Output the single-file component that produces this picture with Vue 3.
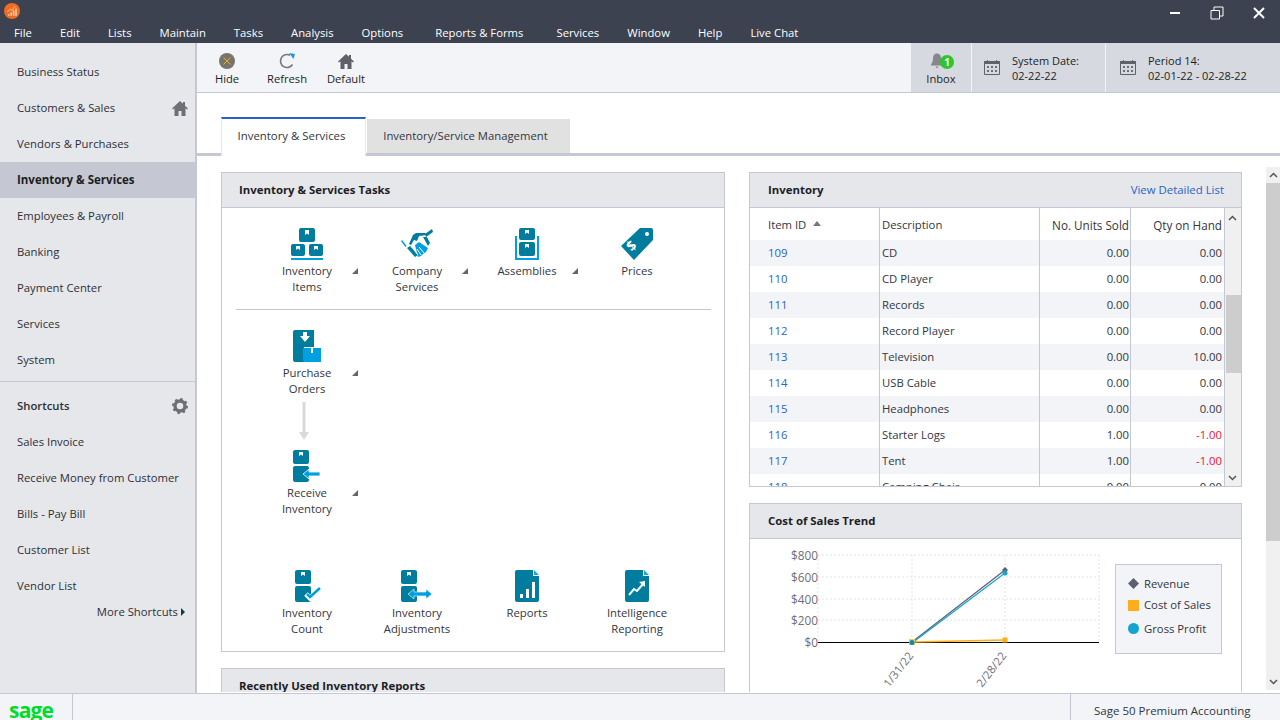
<script setup>
const menus = ['File', 'Edit', 'Lists', 'Maintain', 'Tasks', 'Analysis', 'Options', 'Reports & Forms', 'Services', 'Window', 'Help', 'Live Chat'];
const navItems = ['Business Status', 'Customers & Sales', 'Vendors & Purchases', 'Inventory & Services', 'Employees & Payroll', 'Banking', 'Payment Center', 'Services', 'System'];
const shortcuts = ['Sales Invoice', 'Receive Money from Customer', 'Bills - Pay Bill', 'Customer List', 'Vendor List'];

const rows = [
    ['109', 'CD', '0.00', '0.00'],
    ['110', 'CD Player', '0.00', '0.00'],
    ['111', 'Records', '0.00', '0.00'],
    ['112', 'Record Player', '0.00', '0.00'],
    ['113', 'Television', '0.00', '10.00'],
    ['114', 'USB Cable', '0.00', '0.00'],
    ['115', 'Headphones', '0.00', '0.00'],
    ['116', 'Starter Logs', '1.00', '-1.00'],
    ['117', 'Tent', '1.00', '-1.00'],
    ['118', 'Camping Chair', '0.00', '0.00'],
];

const yTicks = [['$800', 556], ['$600', 578], ['$400', 600], ['$200', 621], ['$0', 643]];
</script>

<template>
    <div class="app">
        <header class="titlebar">
            <div class="title-top">
                <svg class="app-logo" width="16" height="16" viewBox="0 0 20 20">
                    <circle cx="10" cy="10" r="10" fill="#f26b21" />
                    <path d="M5 14h2v2H5zM8 12h2v4H8zM11 9h2v7h-2zM14 7h2v9h-2z" fill="#fbd0b0" />
                    <path d="M4 11l4-3 2 1 4-5" stroke="#fbd0b0" fill="none" />
                </svg>
                <div class="win-btns">
                    <svg width="14" height="14" viewBox="0 0 14 14"><path d="M2 7h10" stroke="#fff" stroke-width="2" /></svg>
                    <svg width="14" height="14" viewBox="0 0 14 14"><path d="M1 4.500h8.500v8.500h-8.500zM4 4V1h9v9h-3.500" stroke="#fff" fill="none" /></svg>
                    <svg width="14" height="14" viewBox="0 0 14 14"><path d="M2 2l10 10M12 2L2 12" stroke="#fff" stroke-width="2" /></svg>
                </div>
            </div>
            <nav class="menubar">
                <span v-for="m in menus" :key="m">{{ m }}</span>
            </nav>
        </header>

        <div class="middle">
            <aside class="sidebar">
                <div class="nav">
                    <div v-for="item in navItems" :key="item" class="nav-item" :class="{ active: item === 'Inventory & Services' }">
                        {{ item }}
                        <svg v-if="item === 'Customers & Sales'" class="nav-home" width="16" height="16" viewBox="0 0 16 16">
                            <path d="M8 1L0 8.500l1 1 1.500-1.300V16h4v-5h3v5h4V8.200L15 9.500l1-1-3-2.800V2h-2v1.800z" fill="#6d6f75" />
                        </svg>
                    </div>
                </div>
                <div class="shortcuts-head">
                    <span>Shortcuts</span>
                    <svg width="16" height="16" viewBox="0 0 16 16">
                        <circle cx="8" cy="8" r="5" fill="none" stroke="#6d6f75" stroke-width="3.400" />
                        <circle cx="8" cy="8" r="7" fill="none" stroke="#6d6f75" stroke-width="2" stroke-dasharray="2.500 3" />
                    </svg>
                </div>
                <div v-for="s in shortcuts" :key="s" class="nav-item">{{ s }}</div>
                <div class="more">More Shortcuts <i class="more-arrow"></i></div>
            </aside>

            <main class="main">
                <div class="toolbar">
                    <div class="tool tool-hide">
                        <svg width="16" height="16" viewBox="0 0 16 16">
                            <circle cx="8" cy="8" r="8" fill="#76746f" />
                            <path d="M4.500 4.500l7 7M11.500 4.500l-7 7" stroke="#f5a81c" />
                        </svg>
                        <span>Hide</span>
                    </div>
                    <div class="tool tool-refresh">
                        <svg width="17" height="16" viewBox="0 0 17 16">
                            <path d="M13.500 11.500A6.500 6.500 0 1 1 11 2.300" fill="none" stroke="#75787e" stroke-width="1.600" />
                            <path d="M10 0l6 1-1.500 5z" fill="#1b9ad6" />
                        </svg>
                        <span>Refresh</span>
                    </div>
                    <div class="tool tool-default">
                        <svg width="16" height="16" viewBox="0 0 16 16">
                            <path d="M8 1L0 8.500l1 1 1.500-1.300V16h4v-5h3v5h4V8.200L15 9.500l1-1-3-2.800V2h-2v1.800z" fill="#5f6168" />
                        </svg>
                        <span>Default</span>
                    </div>
                    <div class="toolbar-right">
                        <div class="inbox">
                            <div class="bell">
                                <svg width="12" height="16" viewBox="0 0 12 16">
                                    <path d="M6 0.500c-3 0-4 2.500-4 5 0 3-1 4.500-2 6v1h12v-1c-1-1.500-2-3-2-6 0-2.500-1-5-4-5zM4.500 13.500h3L6 15.500z" fill="#85878c" />
                                </svg>
                                <span class="badge">1</span>
                            </div>
                            <span>Inbox</span>
                        </div>
                        <div class="date-box date-system">
                            <svg width="16" height="16" viewBox="0 0 16 16">
                                <path d="M0.500 2.500h15v13h-15z" fill="none" stroke="#5f626b" />
                                <path d="M0 2h16v3H0zM3 1h1v2H3zM12 1h1v2h-1z" fill="#5f626b" />
                                <path d="M3 7h2v2H3zM7 7h2v2H7zM11 7h2v2h-2zM3 11h2v2H3zM7 11h2v2H7zM11 11h2v2h-2z" fill="#6c6f78" />
                            </svg>
                            <div>System Date:<br />02-22-22</div>
                        </div>
                        <div class="date-box date-period">
                            <svg width="16" height="16" viewBox="0 0 16 16">
                                <path d="M0.500 2.500h15v13h-15z" fill="none" stroke="#5f626b" />
                                <path d="M0 2h16v3H0zM3 1h1v2H3zM12 1h1v2h-1z" fill="#5f626b" />
                                <path d="M3 7h2v2H3zM7 7h2v2H7zM11 7h2v2h-2zM3 11h2v2H3zM7 11h2v2H7zM11 11h2v2h-2z" fill="#6c6f78" />
                            </svg>
                            <div>Period 14:<br />02-01-22 - 02-28-22</div>
                        </div>
                    </div>
                </div>

                <div class="tabs">
                    <div class="tab tab-active">Inventory &amp; Services</div>
                    <div class="tab tab-other">Inventory/Service Management</div>
                </div>

                <div class="body">
                    <div class="pane">
                        <div class="col-left">
                            <section class="panel">
                                <div class="panel-head">Inventory &amp; Services Tasks</div>
                                <div class="tasks">
                                    <div class="task-row">
                                        <div class="task has-menu">
                                            <svg width="32" height="32" viewBox="0 0 32 32">
                                                <rect x="8" y="0" width="16" height="14" rx="2" fill="#007c9e" />
                                                <rect x="0" y="16" width="14" height="12" rx="2" fill="#007c9e" />
                                                <rect x="18" y="16" width="14" height="12" rx="2" fill="#007c9e" />
                                                <path d="M14 2h4v5l-2-1.500-2 1.500zM5 18h4v4l-2-1.500-2 1.500zM23 18h4v4l-2-1.500-2 1.500z" fill="#fff" />
                                                <rect x="0" y="30" width="32" height="2" fill="#009fe0" />
                                            </svg>
                                            <span>Inventory<br />Items</span>
                                        </div>
                                        <div class="task has-menu">
                                            <svg width="32" height="32" viewBox="0 0 32 32">
                                                <path d="M0.500 12.500L5 18.500" stroke="#009fe0" stroke-width="1.500" />
                                                <path d="M6 20l3-2 8 9-3 2z" fill="#007c9e" />
                                                <path d="M8 16l4-9 3-2h9l2 2-8 1-2 5-3-1-3 5z" fill="#007c9e" />
                                                <path d="M24 6l7-5 1 3-7 5z" fill="#007c9e" />
                                                <path d="M14 17l4-3 9 6-2 4-3 2-2 2-3 1z" fill="#009fe0" />
                                                <path d="M18 19l5 6M16 21l4 6M14 23l3 4" stroke="#fff" />
                                                <path d="M22 9l5 9 2-3-3-6z" fill="#007c9e" />
                                            </svg>
                                            <span>Company<br />Services</span>
                                        </div>
                                        <div class="task has-menu">
                                            <svg width="32" height="32" viewBox="0 0 32 32">
                                                <rect x="8" y="0" width="16" height="12" rx="2" fill="#007c9e" />
                                                <rect x="8" y="14" width="16" height="14" rx="2" fill="#007c9e" />
                                                <path d="M14 2h4v4l-2-1.500-2 1.500zM14 16h4v4l-2-1.500-2 1.500z" fill="#fff" />
                                                <path d="M5 8v23h22V8" fill="none" stroke="#009fe0" stroke-width="2" />
                                            </svg>
                                            <span>Assemblies</span>
                                        </div>
                                        <div class="task">
                                            <svg width="32" height="32" viewBox="0 0 32 32">
                                                <path d="M19 0h11a2 2 0 0 1 2 2v10L13 32 0 18z" fill="#007c9e" />
                                                <circle cx="26" cy="6" r="2" fill="#fff" />
                                                <text x="0" y="0" transform="translate(11 24) rotate(-45)" class="tag-text">$</text>
                                            </svg>
                                            <span>Prices</span>
                                        </div>
                                    </div>
                                    <div class="task-sep"></div>
                                    <div class="task-row">
                                        <div class="task has-menu">
                                            <svg width="32" height="32" viewBox="0 0 32 32">
                                                <path d="M4 0h19v17H13v15H4a2 2 0 0 1-2-2V2a2 2 0 0 1 2-2z" fill="#007c9e" />
                                                <path d="M12 2h4v4h3l-5 6-5-6h3z" fill="#fff" />
                                                <path d="M12 18h18v14H14a2 2 0 0 1-2-2z" fill="#009fe0" />
                                                <path d="M20 18h2v5h-2z" fill="#fff" />
                                            </svg>
                                            <span>Purchase<br />Orders</span>
                                        </div>
                                    </div>
                                    <svg class="flow-arrow" width="10" height="38" viewBox="0 0 10 38">
                                        <path d="M3.500 0h3v30h3.500L5 38 0 30h3.500z" fill="#d9d9d9" />
                                    </svg>
                                    <div class="task-row">
                                        <div class="task has-menu">
                                            <svg width="32" height="32" viewBox="0 0 32 32">
                                                <rect x="2" y="0" width="16" height="14" rx="2" fill="#007c9e" />
                                                <rect x="2" y="16" width="16" height="16" rx="2" fill="#007c9e" />
                                                <path d="M8 2h4v4l-2-1.500L8 6z" fill="#fff" />
                                                <path d="M12 24l6-5v3h11v4H18v3z" fill="#009fe0" stroke="#fff" stroke-width=".8" />
                                            </svg>
                                            <span>Receive<br />Inventory</span>
                                        </div>
                                    </div>
                                    <div class="task-row task-row-last">
                                        <div class="task">
                                            <svg width="32" height="32" viewBox="0 0 32 32">
                                                <rect x="4" y="0" width="16" height="14" rx="2" fill="#007c9e" />
                                                <rect x="4" y="16" width="16" height="16" rx="2" fill="#007c9e" />
                                                <path d="M10 2h4v4l-2-1.500L10 6z" fill="#fff" />
                                                <path d="M15 24l4 4 11-10" fill="none" stroke="#fff" stroke-width="5" />
                                                <path d="M16 24l3 3 10-9" fill="none" stroke="#009fe0" stroke-width="2.500" />
                                            </svg>
                                            <span>Inventory<br />Count</span>
                                        </div>
                                        <div class="task">
                                            <svg width="32" height="32" viewBox="0 0 32 32">
                                                <rect x="0" y="0" width="16" height="14" rx="2" fill="#007c9e" />
                                                <rect x="0" y="16" width="16" height="16" rx="2" fill="#007c9e" />
                                                <path d="M6 2h4v4l-2-1.500-2 1.500z" fill="#fff" />
                                                <path d="M7 24l6-5v3h12v-3l6 5-6 5v-3H13v3z" fill="#009fe0" stroke="#fff" stroke-width=".6" />
                                            </svg>
                                            <span>Inventory<br />Adjustments</span>
                                        </div>
                                        <div class="task">
                                            <svg width="32" height="32" viewBox="0 0 32 32">
                                                <path d="M6 0h16l6 6v24a2 2 0 0 1-2 2H6a2 2 0 0 1-2-2V2a2 2 0 0 1 2-2z" fill="#007c9e" />
                                                <path d="M22 0h2l4 4v2h-6z" fill="#fff" />
                                                <path d="M23 0l5 5h-5z" fill="#1aa6de" />
                                                <path d="M9 24h3v4H9zM15 19h3v9h-3zM21 12h3v16h-3z" fill="#fff" />
                                            </svg>
                                            <span>Reports</span>
                                        </div>
                                        <div class="task">
                                            <svg width="32" height="32" viewBox="0 0 32 32">
                                                <path d="M6 0h16l6 6v24a2 2 0 0 1-2 2H6a2 2 0 0 1-2-2V2a2 2 0 0 1 2-2z" fill="#007c9e" />
                                                <path d="M22 0h2l4 4v2h-6z" fill="#fff" />
                                                <path d="M23 0l5 5h-5z" fill="#1aa6de" />
                                                <path d="M8 25l5-6 3 2 6-7" fill="none" stroke="#fff" stroke-width="2" />
                                                <path d="M18 12l6-1v6z" fill="#fff" />
                                            </svg>
                                            <span>Intelligence<br />Reporting</span>
                                        </div>
                                    </div>
                                </div>
                            </section>
                            <section class="panel panel-recent">
                                <div class="panel-head">Recently Used Inventory Reports</div>
                            </section>
                        </div>

                        <div class="col-right">
                            <section class="panel">
                                <div class="panel-head panel-head-split">
                                    <span>Inventory</span>
                                    <a class="link-list">View Detailed List</a>
                                </div>
                                <div class="table-wrap">
                                    <div class="table">
                                        <div class="tr th">
                                            <div class="c-id">Item ID <i class="sort-arrow"></i></div>
                                            <div class="c-desc">Description</div>
                                            <div class="c-num c-units">No. Units Sold</div>
                                            <div class="c-num c-qty">Qty on Hand</div>
                                        </div>
                                        <div v-for="r in rows" :key="r[0]" class="tr">
                                            <div class="c-id id-link">{{ r[0] }}</div>
                                            <div class="c-desc">{{ r[1] }}</div>
                                            <div class="c-num c-units">{{ r[2] }}</div>
                                            <div class="c-num c-qty" :class="{ neg: r[3].startsWith('-') }">{{ r[3] }}</div>
                                        </div>
                                    </div>
                                    <div class="tscroll">
                                        <svg class="chev" width="9" height="6" viewBox="0 0 9 6"><path d="M1 5l3.500-3.500L8 5" fill="none" stroke="#555" stroke-width="1.500" /></svg>
                                        <div class="tthumb"></div>
                                        <svg class="chev chev-end" width="9" height="6" viewBox="0 0 9 6"><path d="M1 1l3.500 3.500L8 1" fill="none" stroke="#555" stroke-width="1.500" /></svg>
                                    </div>
                                </div>
                            </section>

                            <section class="panel panel-trend">
                                <div class="panel-head panel-head-trend">Cost of Sales Trend</div>
                                <div class="trend">
                                    <svg class="chart" width="365" height="160" viewBox="750 540 365 160">
                                        <g stroke="#e3e3e3" stroke-dasharray="2 2">
                                            <path v-for="t in yTicks.slice(0, 4)" :key="t[0]" :d="`M818 ${t[1]}H1099`" />
                                            <path d="M818 556V643M912 556V643M1005 556V643M1099 556V643" />
                                        </g>
                                        <text v-for="t in yTicks" :key="t[0]" x="818" :y="t[1] + 5" class="axis" text-anchor="end">{{ t[0] }}</text>
                                        <path d="M818 643.500H1099" stroke="#000" stroke-width="1.200" />
                                        <path d="M912 643L1005 641" stroke="#ffad1a" stroke-width="1.500" />
                                        <path d="M912 643L1005 571" stroke="#5c6070" stroke-width="1.200" />
                                        <path d="M912 644L1005 574" stroke="#12a5cf" stroke-width="1.200" />
                                        <rect x="1002.500" y="638.500" width="5" height="5" fill="#ffad1a" />
                                        <rect x="909" y="640" width="6" height="6" fill="#ffc94d" />
                                        <path d="M1005 568l3 3-3 3-3-3z" fill="#5c6070" />
                                        <circle cx="1005" cy="574" r="2.500" fill="#12a5cf" />
                                        <circle cx="912" cy="643.500" r="2.500" fill="#0e8ab0" />
                                        <text transform="translate(889 689) rotate(-52)" class="axis axis-date">1/31/22</text>
                                        <text transform="translate(982 689) rotate(-52)" class="axis axis-date">2/28/22</text>
                                    </svg>
                                    <div class="legend">
                                        <div class="legend-item"><i class="lg lg-rev"></i>Revenue</div>
                                        <div class="legend-item legend-cost"><i class="lg lg-cost"></i>Cost of Sales</div>
                                        <div class="legend-item"><i class="lg lg-gross"></i>Gross Profit</div>
                                    </div>
                                </div>
                            </section>
                        </div>
                    </div>

                    <div class="vscroll">
                        <div class="v-up">
                            <svg width="9" height="6" viewBox="0 0 9 6"><path d="M1 5l3.500-3.500L8 5" fill="none" stroke="#555" stroke-width="1.500" /></svg>
                        </div>
                        <div class="v-thumb"></div>
                        <div class="v-down">
                            <svg width="9" height="6" viewBox="0 0 9 6"><path d="M1 1l3.500 3.500L8 1" fill="none" stroke="#555" stroke-width="1.500" /></svg>
                        </div>
                    </div>
                </div>
            </main>
        </div>

        <footer class="statusbar">
            <div class="sage-cell"><span class="sage">sage</span></div>
            <div class="status-fill"></div>
            <div class="status-name">Sage 50 Premium Accounting</div>
        </footer>
    </div>
</template>

<style scoped>
.app {
    width: 1280px;
    height: 720px;
    display: flex;
    flex-direction: column;
    overflow: hidden;
    font-family: "Open Sans", "Noto Sans", sans-serif;
    font-size: 11.300px;
    line-height: 16px;
    color: #33363f;
    background: #fff;
}

/* title bar */
.titlebar {
    height: 43px;
    flex: none;
    background: #3c4250;
    color: #fff;
}
.title-top {
    height: 23px;
    display: flex;
    justify-content: space-between;
    align-items: flex-start;
    padding-left: 4px;
}
.app-logo {
    margin-top: 3px;
}
.win-btns {
    display: flex;
    gap: 28px;
    padding: 6px 14px 0 0;
}
.menubar {
    display: flex;
    padding-left: 14px;
    line-height: 20px;
    gap: 28px;
}
.menubar span:nth-child(8) {
    margin-left: 4px;
}
.menubar span:nth-child(9) {
    margin-left: 5px;
}

.middle {
    height: 650px;
    flex: none;
    display: flex;
}

/* left nav */
.sidebar {
    width: 195px;
    flex: none;
    background: #e6e7eb;
    border-right: 2px solid #c5c8d2;
    padding-top: 11px;
    color: #2d2f36;
}
.nav {
    border-bottom: 1px solid #c5c8d2;
    padding-bottom: 3px;
}
.nav-item {
    height: 36px;
    padding-left: 17px;
    display: flex;
    align-items: center;
    position: relative;
}
.nav-item.active {
    background: #c5c8d2;
    font-weight: 700;
    font-size: 11.500px;
    color: #1d1e24;
}
.nav-home {
    position: absolute;
    right: 7px;
    top: 10px;
}
.shortcuts-head {
    height: 48px;
    padding: 0 7px 0 17px;
    display: flex;
    align-items: center;
    justify-content: space-between;
    font-weight: 600;
    margin-bottom: -6px;
}
.more {
    display: flex;
    justify-content: flex-end;
    align-items: center;
    gap: 3px;
    padding-right: 10px;
}
.more-arrow {
    width: 0;
    height: 0;
    border-left: 4px solid #123c46;
    border-top: 4px solid transparent;
    border-bottom: 4px solid transparent;
}

.main {
    flex: 1;
    min-width: 0;
    display: flex;
    flex-direction: column;
}

/* toolbar */
.toolbar {
    height: 50px;
    flex: none;
    box-sizing: border-box;
    background: #f2f4f8;
    border-bottom: 1px solid #c5c8d2;
    display: flex;
    padding-left: 10px;
    color: #1d1e24;
    font-size: 11.200px;
}
.tool {
    display: flex;
    flex-direction: column;
    align-items: center;
    padding-top: 10px;
    gap: 2px;
}
.tool-hide {
    width: 40px;
}
.tool-refresh {
    width: 60px;
    margin-left: 10px;
}
.tool-default {
    width: 58px;
}
.toolbar-right {
    margin-left: auto;
    display: flex;
    background: #d6d9e0;
}
.inbox {
    width: 61px;
    box-sizing: border-box;
    display: flex;
    flex-direction: column;
    align-items: center;
    padding-top: 10px;
    gap: 2px;
    border-right: 1px solid #f2f4f8;
}
.bell {
    position: relative;
    height: 16px;
    width: 24px;
}
.bell svg {
    position: absolute;
    left: 2px;
    top: 0;
}
.badge {
    position: absolute;
    left: 11px;
    top: 2px;
    width: 14px;
    height: 14px;
    border-radius: 50%;
    background: #2ec52e;
    color: #fff;
    font-size: 10px;
    font-weight: 700;
    line-height: 14px;
    text-align: center;
}
.date-box {
    display: flex;
    align-items: center;
    gap: 12px;
    padding-left: 12px;
    line-height: 15px;
    font-size: 11px;
    box-sizing: border-box;
}
.date-box svg {
    margin-top: -2px;
}
.date-system {
    width: 134px;
    border-right: 1px solid #f2f4f8;
}
.date-period {
    width: 174px;
    padding-left: 14px;
}

/* tabs */
.tabs {
    flex: none;
    height: 39px;
    margin-top: 24px;
    box-sizing: border-box;
    padding-left: 24px;
    border-bottom: 3px solid #c5c8d2;
    display: flex;
    align-items: flex-end;
    gap: 1px;
}
.tab {
    display: flex;
    align-items: center;
    justify-content: center;
    box-sizing: border-box;
}
.tab-active {
    width: 145px;
    height: 39px;
    margin-bottom: -3px;
    background: #fff;
    border-top: 2px solid #2a5fd0;
    border-left: 1px solid #e6e7eb;
    border-right: 1px solid #e6e7eb;
    padding: 0 4px 4px 0;
    font-size: 11.400px;
}
.tab-other {
    width: 203px;
    height: 34px;
    background: #e1e1e1;
    padding-right: 6px;
}

/* scrolling body */
.body {
    flex: 1;
    min-height: 0;
    display: flex;
}
.pane {
    flex: 1;
    min-width: 0;
    overflow: hidden;
    display: flex;
    gap: 24px;
    padding: 16px 0 0 24px;
    margin-bottom: 1px;
}
.col-left {
    width: 504px;
    flex: none;
}
.col-right {
    width: 493px;
    flex: none;
}
.panel {
    border: 1px solid #c5c8d2;
    box-sizing: border-box;
    background: #fff;
}
.panel-head {
    height: 34px;
    background: #e6e7eb;
    border-bottom: 1px solid #c5c8d2;
    padding: 0 17px;
    display: flex;
    align-items: center;
    font-weight: 700;
    font-size: 11.400px;
    color: #1d1e24;
}
.panel-head-split {
    justify-content: space-between;
    padding-left: 18px;
}
.panel-head-trend {
    padding-left: 18px;
}
.link-list {
    font-weight: 400;
    color: #2a62c9;
}
.panel-recent {
    margin-top: 16px;
    height: 80px;
}
.panel-trend {
    margin-top: 16px;
    height: 220px;
}

/* task area */
.tasks {
    padding: 20px 0 14px;
    text-align: center;
}
.task-row {
    display: flex;
    padding-left: 30px;
}
.task-row-last {
    margin-top: 53px;
}
.task {
    width: 110px;
    display: flex;
    flex-direction: column;
    align-items: center;
    gap: 3px;
    position: relative;
}
.task svg {
    display: block;
}
.task.has-menu::after {
    content: "";
    position: absolute;
    right: 4px;
    top: 40px;
    border-bottom: 6px solid #666;
    border-left: 6px solid transparent;
}
.tag-text {
    font-family: "Open Sans", sans-serif;
    font-size: 14px;
    font-weight: 700;
    fill: #fff;
}
.task-sep {
    height: 1px;
    background: #c5c8d2;
    margin: 14px 13px 20px 14px;
}
.flow-arrow {
    display: block;
    margin: 5px 0 10px 77px;
}

/* inventory table */
.table-wrap {
    height: 278px;
    display: flex;
}
.table {
    flex: 1;
    min-width: 0;
    overflow: hidden;
}
.tr {
    display: flex;
    height: 26px;
    align-items: stretch;
}
.tr:nth-child(even) {
    background: #f2f4f8;
}
.tr > div {
    display: flex;
    align-items: center;
    box-sizing: border-box;
    border-right: 1px solid #c5c8d2;
}
.tr > div:last-child {
    border-right: 0;
}
.th {
    height: 32px;
}
.th > div {
    padding-top: 2px;
}
.th .c-num {
    font-size: 11.700px;
}
.c-id {
    width: 130px;
    padding-left: 18px;
}
.c-desc {
    width: 160px;
    padding-left: 2px;
}
.c-num {
    justify-content: flex-end;
    padding-right: 2px;
}
.c-units {
    width: 91px;
    padding-right: 1px;
}
.c-qty {
    width: 93px;
}
.id-link {
    color: #2a62c9;
}
.neg {
    color: #f01030;
}
.sort-arrow {
    margin-left: 7px;
    margin-bottom: 3px;
    border-left: 4px solid transparent;
    border-right: 4px solid transparent;
    border-bottom: 5px solid #75787e;
}
.tscroll {
    width: 17px;
    flex: none;
    background: #f0f0f0;
    border-left: 1px solid #c5c8d2;
    box-sizing: border-box;
    position: relative;
}
.chev {
    position: absolute;
    left: 3px;
    top: 7px;
}
.chev-end {
    top: auto;
    bottom: 5px;
}
.tthumb {
    position: absolute;
    left: 1px;
    top: 87px;
    width: 15px;
    height: 78px;
    background: #cdcdcd;
}

/* chart */
.trend {
    display: flex;
    align-items: flex-start;
}
.chart {
    flex: none;
    display: block;
}
.axis {
    font-family: "Open Sans", sans-serif;
    font-size: 11.800px;
    fill: #6d6f78;
}
.axis-date {
    font-size: 11.300px;
}
.legend {
    margin-top: 25px;
    width: 107px;
    height: 90px;
    box-sizing: border-box;
    background: #f2f4f8;
    border: 1px solid #c5c8d2;
    padding-top: 7px;
}
.legend-item {
    height: 23px;
    display: flex;
    align-items: center;
    gap: 5px;
    padding-left: 12px;
}
.legend-cost {
    height: 22px;
    margin-bottom: 1px;
    margin-top: -1px;
}
.lg {
    width: 11px;
    height: 11px;
    flex: none;
}
.lg-rev {
    background: #5c6070;
    clip-path: polygon(50% 0, 100% 50%, 50% 100%, 0 50%);
}
.lg-cost {
    background: #ffad1a;
}
.lg-gross {
    background: #12a5cf;
    border-radius: 50%;
}

/* outer scrollbar */
.vscroll {
    width: 14px;
    flex: none;
    margin: 11px 0 3px 24px;
    display: flex;
    flex-direction: column;
    background: #f0f0f0;
}
.v-up {
    height: 16px;
    display: flex;
    align-items: center;
    justify-content: center;
}
.v-thumb {
    height: 358px;
    background: #cdcdcd;
}
.v-down {
    margin-top: auto;
    height: 16px;
    display: flex;
    align-items: center;
    justify-content: center;
}

/* status bar */
.statusbar {
    height: 27px;
    flex: none;
    box-sizing: border-box;
    border-top: 1px solid #c5c8d2;
    background: #f2f4f8;
    display: flex;
}
.sage-cell {
    width: 73px;
    box-sizing: border-box;
    border-right: 1px solid #c5c8d2;
    padding-left: 9px;
    overflow: hidden;
}
.sage {
    font-family: "Open Sans", sans-serif;
    font-size: 21px;
    font-weight: 700;
    line-height: 32px;
    letter-spacing: -0.8px;
    color: #00dc28;
}
.status-fill {
    flex: 1;
}
.status-name {
    width: 210px;
    box-sizing: border-box;
    border-left: 1px solid #c5c8d2;
    padding-left: 23px;
    line-height: 34px;
    font-size: 11.500px;
}
</style>

<style>
html, body {
    margin: 0;
    overflow: hidden;
}
</style>
